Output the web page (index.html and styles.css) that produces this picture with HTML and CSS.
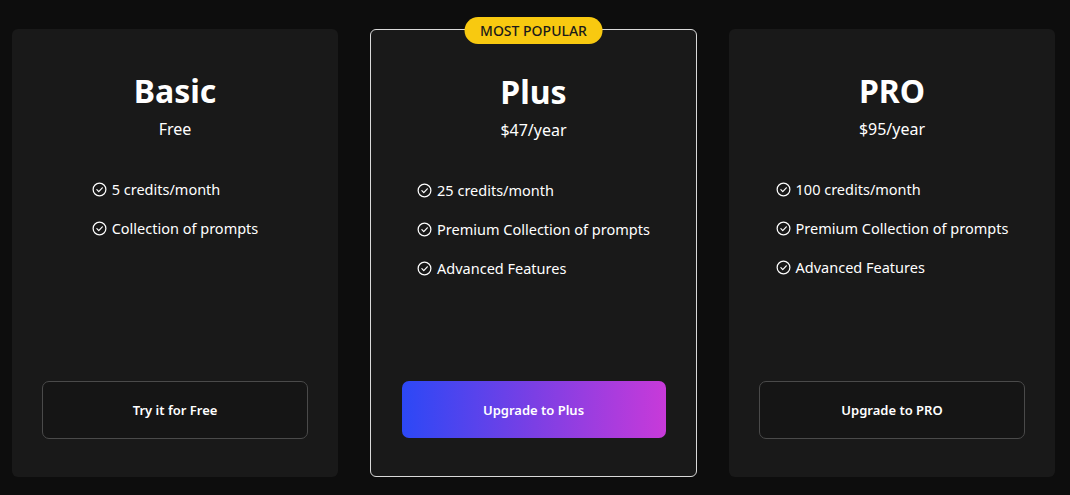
FILE: index.html
```html
<!DOCTYPE html>
<html>
<head>
<meta charset="utf-8">
<link rel="stylesheet" href="styles.css">
</head>
<body>
<div class="plans">
  <div class="card">
    <h2 class="title">Basic</h2>
    <div class="price">Free</div>
    <ul class="features">
      <li><svg class="check" viewBox="0 0 16 16"><circle cx="8" cy="8" r="6.8"/><path d="M5.2 8.2l2 2 3.8-4"/></svg>5 credits/month</li>
      <li><svg class="check" viewBox="0 0 16 16"><circle cx="8" cy="8" r="6.8"/><path d="M5.2 8.2l2 2 3.8-4"/></svg>Collection of prompts</li>
    </ul>
    <button class="btn">Try it for Free</button>
  </div>
  <div class="card featured">
    <div class="badge">MOST POPULAR</div>
    <h2 class="title">Plus</h2>
    <div class="price">$47/year</div>
    <ul class="features">
      <li><svg class="check" viewBox="0 0 16 16"><circle cx="8" cy="8" r="6.8"/><path d="M5.2 8.2l2 2 3.8-4"/></svg>25 credits/month</li>
      <li><svg class="check" viewBox="0 0 16 16"><circle cx="8" cy="8" r="6.8"/><path d="M5.2 8.2l2 2 3.8-4"/></svg>Premium Collection of prompts</li>
      <li><svg class="check" viewBox="0 0 16 16"><circle cx="8" cy="8" r="6.8"/><path d="M5.2 8.2l2 2 3.8-4"/></svg>Advanced Features</li>
    </ul>
    <button class="btn btn-gradient">Upgrade to Plus</button>
  </div>
  <div class="card">
    <h2 class="title">PRO</h2>
    <div class="price">$95/year</div>
    <ul class="features">
      <li><svg class="check" viewBox="0 0 16 16"><circle cx="8" cy="8" r="6.8"/><path d="M5.2 8.2l2 2 3.8-4"/></svg>100 credits/month</li>
      <li><svg class="check" viewBox="0 0 16 16"><circle cx="8" cy="8" r="6.8"/><path d="M5.2 8.2l2 2 3.8-4"/></svg>Premium Collection of prompts</li>
      <li><svg class="check" viewBox="0 0 16 16"><circle cx="8" cy="8" r="6.8"/><path d="M5.2 8.2l2 2 3.8-4"/></svg>Advanced Features</li>
    </ul>
    <button class="btn">Upgrade to PRO</button>
  </div>
</div>
</body>
</html>
```
FILE: styles.css
```css
* { box-sizing: border-box; }
html, body {
  margin: 0;
  background: #0d0d0d;
  color: #fff;
  font-family: "Noto Sans", "Open Sans", sans-serif;
}
.plans {
  display: flex;
  gap: 32px;
  padding: 29px 15px 18px 12px;
}
.card {
  position: relative;
  flex: 1;
  height: 448px;
  background: #191919;
  border-radius: 6px;
  display: flex;
  flex-direction: column;
  align-items: center;
  padding: 44px 30px 38px;
}
.featured {
  border: 1.5px solid #d9d9d9;
  padding-top: 44px;
}
.badge {
  position: absolute;
  top: -13px;
  left: 50%;
  transform: translateX(-50%);
  background: #f8c910;
  color: #1a1a1a;
  font-size: 14px;
  font-weight: 500;
  height: 27px;
  line-height: 27px;
  padding: 0 16px;
  border-radius: 14px;
  white-space: nowrap;
}
.title {
  margin: 0;
  font-size: 32px;
  font-weight: 700;
  line-height: 36px;
}
.price {
  font-size: 16px;
  margin-top: 9px;
  line-height: 22px;
}
.features {
  list-style: none;
  margin: 38px 0 0;
  padding: 0;
}
.features li {
  display: flex;
  align-items: center;
  font-size: 14.5px;
  height: 22px;
  margin-bottom: 17px;
}
.check {
  width: 15px;
  height: 15px;
  margin-right: 5px;
  fill: none;
  stroke: #fff;
  stroke-width: 1.3;
  stroke-linecap: round;
  stroke-linejoin: round;
}
.btn {
  margin-top: auto;
  width: 266px;
  height: 58px;
  background: #151515;
  border: 1px solid #4a4a4a;
  border-radius: 7px;
  color: #fff;
  font-family: inherit;
  font-size: 13px;
  font-weight: 600;
}
.btn-gradient {
  border: none;
  height: 57px;
  width: 264px;
  background: linear-gradient(90deg, #2c48f6 0%, #7b3fe4 50%, #c83ad9 100%);
}
```
